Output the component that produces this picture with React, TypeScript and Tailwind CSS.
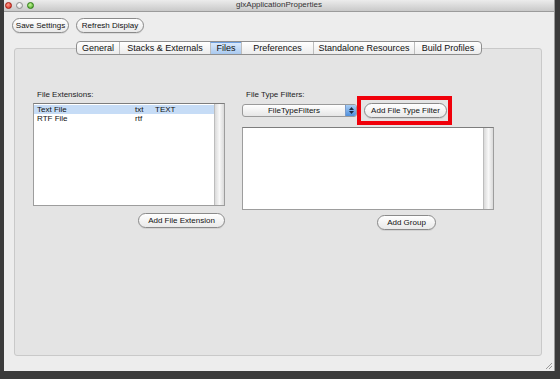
import React from "react";

const font = { fontFamily: '"Liberation Sans", Arial, sans-serif' };

function PillButton({ label, className = "" }: { label: string; className?: string }) {
  return (
    <button
      className={`h-[15px] whitespace-nowrap rounded-full border border-[#8a8a8a] bg-gradient-to-b from-white to-[#e9e9e9] text-[8px] leading-none text-[#111] shadow-[0_1px_0_rgba(0,0,0,0.08)] ${className}`}
    >
      {label}
    </button>
  );
}

const tabs = [
  { name: "General", w: "w-[42px]" },
  { name: "Stacks & Externals", w: "w-[91px]" },
  { name: "Files", w: "w-[31px]" },
  { name: "Preferences", w: "w-[72px]" },
  { name: "Standalone Resources", w: "w-[101px]" },
  { name: "Build Profiles", w: "w-[67px]" },
];

function Scrollbar() {
  return (
    <div className="w-[10px] shrink-0 border-l border-[#bdbdbd] bg-gradient-to-r from-[#dadada] via-[#f8f8f8] to-[#dadada]" />
  );
}

export default function App() {
  return (
    <div className="w-[560px] h-[379px] bg-[#3b3b3b] pl-[4px] pr-[5px] pb-[8px] flex" style={font}>
      <div className="flex-1 flex flex-col bg-[#ededed] border-r border-[#9a9a9a]">
        {/* title bar */}
        <div className="h-[12px] shrink-0 flex items-center bg-gradient-to-b from-[#ececec] to-[#c9c9c9] border-b border-[#9b9b9b] relative">
          <div className="flex items-center gap-[4px] pl-[1px]">
            <span className="w-[7px] h-[7px] rounded-full bg-[radial-gradient(circle_at_40%_35%,#ff9a8a,#d8261a)] border border-[#a31a10]" />
            <span className="w-[7px] h-[7px] rounded-full bg-[radial-gradient(circle_at_40%_35%,#ffffff,#cfcfcf)] border border-[#8d8d8d]" />
            <span className="w-[7px] h-[7px] rounded-full bg-[radial-gradient(circle_at_40%_35%,#c8f59b,#3fa41c)] border border-[#2b7a12]" />
          </div>
          <div className="absolute inset-0 flex items-center justify-center text-[8px] text-[#333] leading-none pb-[1px]">
            glxApplicationProperties
          </div>
        </div>

        {/* toolbar */}
        <div className="flex gap-[7px] pl-[8px] pt-[6px]">
          <PillButton label="Save Settings" className="w-[57px]" />
          <PillButton label="Refresh Display" className="w-[68px]" />
        </div>

        {/* tabs + panel */}
        <div className="flex flex-col mt-[8px] ml-[10px] mr-[12px]">
          <div className="flex justify-center relative z-10 pl-[2px]">
            <div className="flex h-[14px] rounded-[4px] border border-[#8e8e8e] overflow-hidden bg-gradient-to-b from-white to-[#ececec]">
              {tabs.map((t, i) => (
                <div
                  key={t.name}
                  className={`${t.w} flex items-center justify-center text-[9px] leading-none text-[#111] ${
                    i > 0 ? "border-l border-[#bdbdbd]" : ""
                  } ${t.name === "Files" ? "bg-gradient-to-b from-[#d8e8fb] to-[#a9c9ef] border-t border-t-[#6d9fe0]" : ""}`}
                >
                  {t.name}
                </div>
              ))}
            </div>
          </div>

          <div className="-mt-[7px] h-[308px] rounded-[3px] border border-[#c9c9c9] bg-[#e4e4e4] pl-[18px] pt-[42px]">
            <div className="flex gap-[17px]">
              {/* File Extensions */}
              <div className="flex flex-col w-[192px]">
                <div className="text-[8px] leading-none text-[#222] pl-[4px] pb-[4px]">File Extensions:</div>
                <div className="h-[103px] flex bg-white border border-[#9d9d9d] border-t-[#7d7d7d]">
                  <div className="flex-1 pt-[1px] text-[8px] leading-[9px] text-[#111]">
                    <div className="flex h-[9px] bg-[#c6dcf6] pl-[3px]">
                      <span className="w-[98px]">Text File</span>
                      <span className="w-[20px]">txt</span>
                      <span>TEXT</span>
                    </div>
                    <div className="flex h-[9px] pl-[3px]">
                      <span className="w-[98px]">RTF File</span>
                      <span>rtf</span>
                    </div>
                  </div>
                  <Scrollbar />
                </div>
                <div className="flex justify-end mt-[7px]">
                  <PillButton label="Add File Extension" className="w-[87px]" />
                </div>
              </div>

              {/* File Type Filters */}
              <div className="flex flex-col w-[252px]">
                <div className="text-[8px] leading-none text-[#222] pl-[4px] pb-[4px]">File Type Filters:</div>
                <div className="flex items-center gap-[7px]">
                  <div className="w-[115px] h-[13px] flex rounded-[3px] border border-[#9a9a9a] overflow-hidden bg-gradient-to-b from-white to-[#e6e6e6]">
                    <div className="flex-1 flex items-center justify-center text-[8px] leading-none text-[#111]">
                      FileTypeFilters
                    </div>
                    <div className="w-[11px] flex flex-col items-center justify-center gap-[1px] bg-gradient-to-b from-[#a8cdf3] to-[#4e8fdc] border-l border-[#7a9ccc]">
                      <svg width="5" height="3" viewBox="0 0 5 3"><path d="M0 3L2.5 0L5 3Z" fill="#1a2a44" /></svg>
                      <svg width="5" height="3" viewBox="0 0 5 3"><path d="M0 0L2.5 3L5 0Z" fill="#1a2a44" /></svg>
                    </div>
                  </div>
                  <div className="relative">
                    <PillButton label="Add File Type Filter" className="w-[83px] block" />
                    <span className="absolute -top-[7px] -bottom-[7px] -left-[7px] -right-[5px] border-4 border-[#f0000a] pointer-events-none" />
                  </div>
                </div>
                <div className="h-[83px] mt-[9px] flex bg-white border border-[#9d9d9d] border-t-[#7d7d7d]">
                  <div className="flex-1" />
                  <Scrollbar />
                </div>
                <div className="flex mt-[5px] pl-[135px]">
                  <PillButton label="Add Group" className="w-[59px]" />
                </div>
              </div>
            </div>
          </div>
        </div>

        <div className="flex-1 relative">
          <svg className="absolute right-[1px] bottom-[1px]" width="8" height="8" viewBox="0 0 8 8">
            <path d="M7 1L1 7M7 4L4 7" stroke="#9a9a9a" strokeWidth="1" />
          </svg>
        </div>
      </div>
    </div>
  );
}
